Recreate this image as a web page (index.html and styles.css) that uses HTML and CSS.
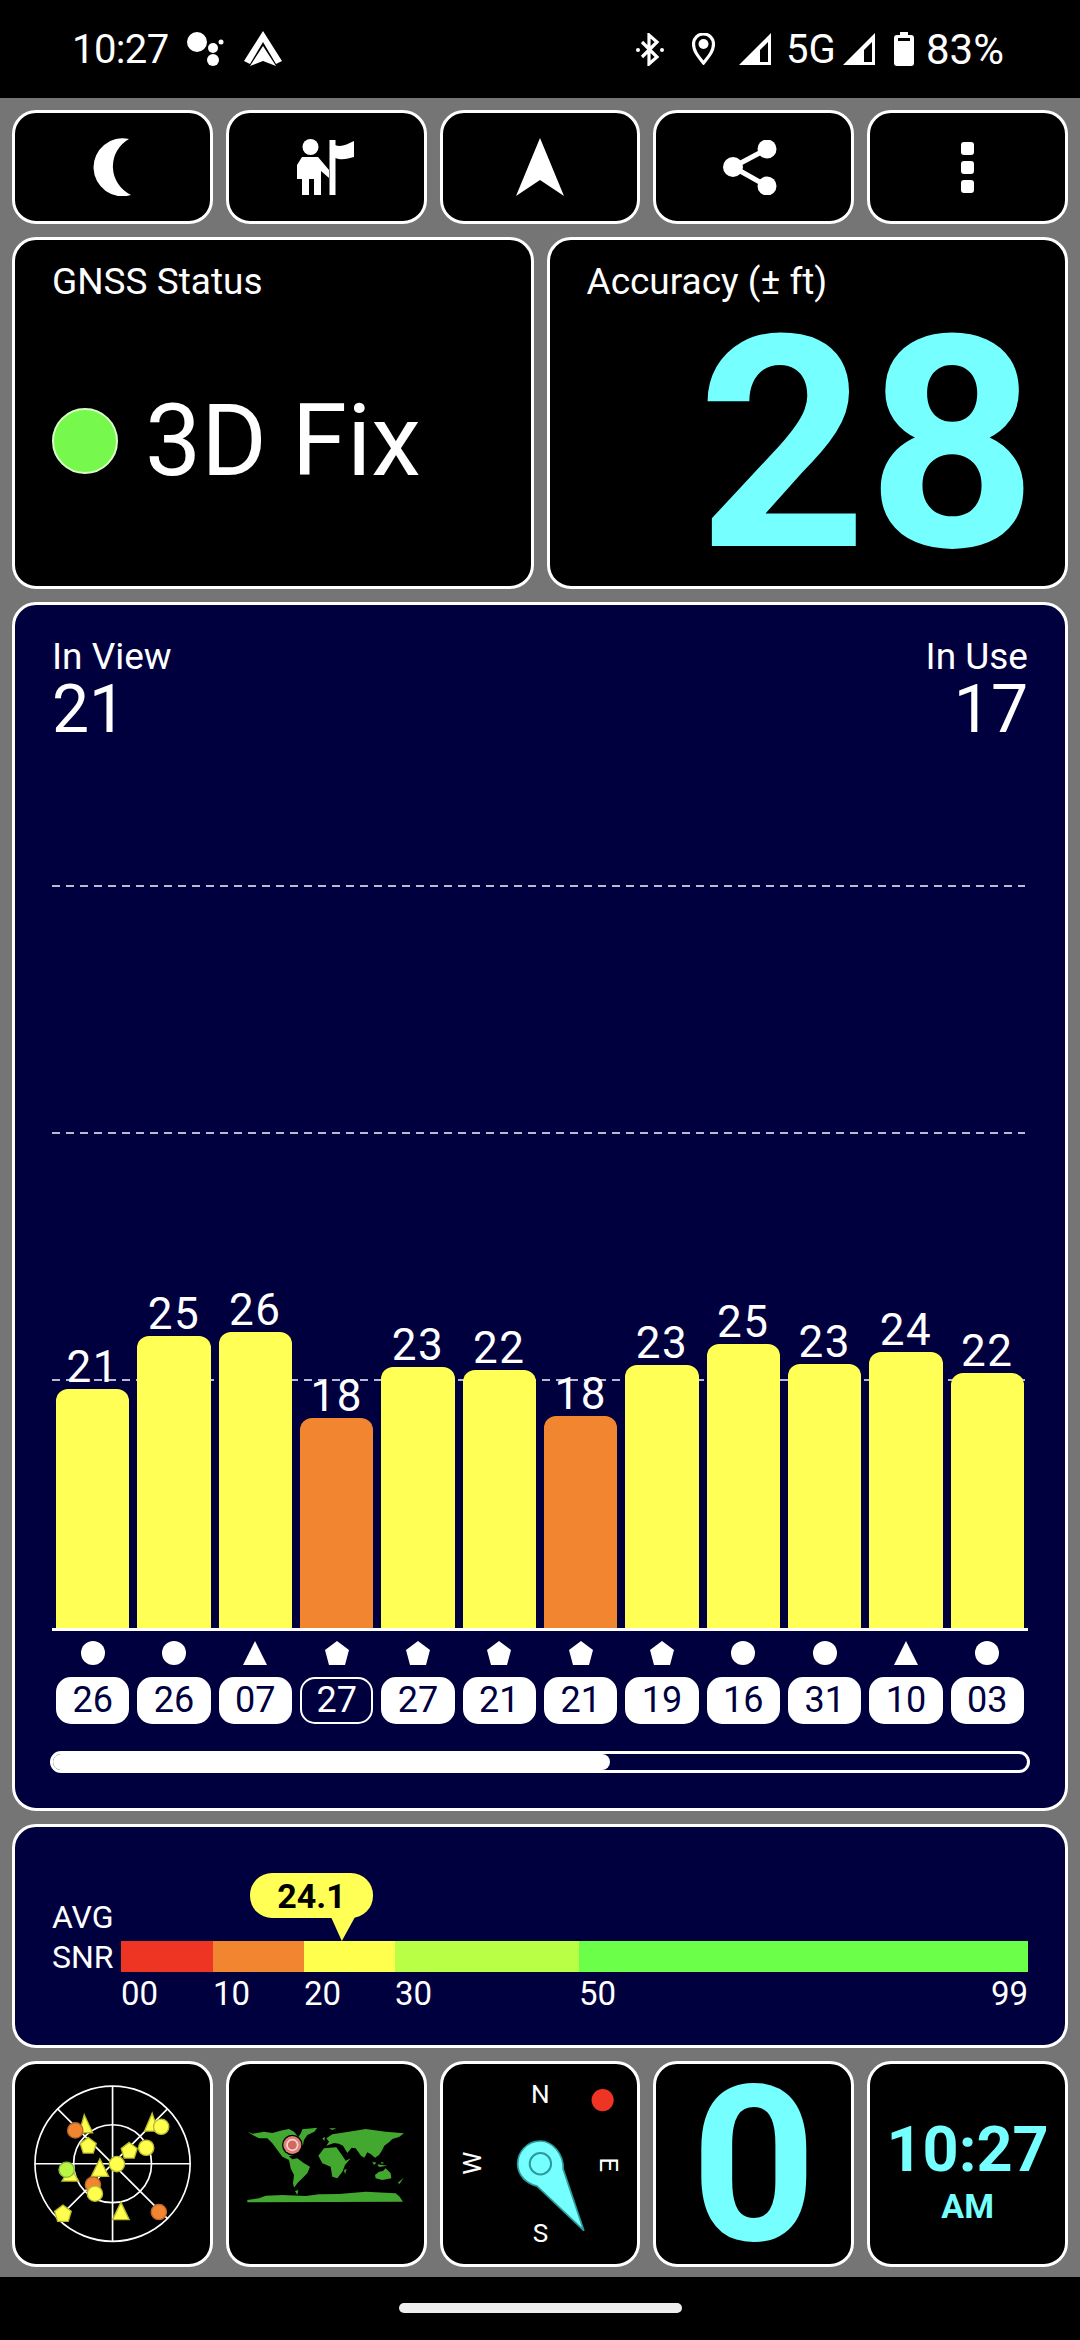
FILE: index.html
```html
<!DOCTYPE html>
<html lang="en">
<head>
  <meta charset="UTF-8">
  <title>GPSTest</title>
  <link rel="stylesheet" href="styles.css">
</head>
<body>
  <!-- STATUS BAR -->
  <div class="status-bar">
    <span class="clock">10:27</span>
    <svg class="ico-assistant" viewBox="186 32 40 36"><circle cx="197" cy="43" r="10"/><circle cx="213" cy="49" r="5"/><circle cx="221" cy="43" r="2.5"/><circle cx="213" cy="61" r="6"/></svg>
    <svg class="ico-auto" viewBox="244 32 38 36"><path d="M263 32 282 62 276 65 263 43 250 65 244 62Z"/><path d="M263 47 276 67 263 62 250 67Z"/></svg>
    <div class="spacer"></div>
    <svg class="ico-bt" viewBox="638 33 28 33"><path class="line" d="M644 42 659 57 651 64V35L659 42 644 57"/><circle cx="640" cy="50" r="2"/><circle cx="664" cy="50" r="2"/></svg>
    <svg class="ico-pin" viewBox="694 33 23 32"><path class="line" d="M705.500 63C700 56 695.500 51 695.500 44A10 10 0 0 1 715.500 44C715.500 51 711 56 705.500 63Z"/><circle cx="705.500" cy="44" r="5"/></svg>
    <svg class="ico-signal" viewBox="0 0 32 32"><path fill-rule="evenodd" d="M0 32 32 0V32ZM21 29H29V9L21 17Z"/></svg>
    <span class="net">5G</span>
    <svg class="ico-signal ico-signal2" viewBox="0 0 32 32"><path fill-rule="evenodd" d="M0 32 32 0V32ZM21 29H29V9L21 17Z"/></svg>
    <svg class="ico-batt" viewBox="0 0 20 34"><path fill-rule="evenodd" d="M6 0H14V3H17Q20 3 20 6V31Q20 34 17 34H3Q0 34 0 31V6Q0 3 3 3H6ZM4 6V9H16V6Z"/></svg>
    <span class="pct">83%</span>
  </div>

  <div class="main">
    <!-- BOTONES -->
    <div class="row-buttons">
      <div class="card btn">
        <svg class="ico-moon" viewBox="0 0 38 58"><path d="M36 1A29 29 0 1 0 38 57 31.500 31.500 0 0 1 36 1Z"/></svg>
      </div>
      <div class="card btn">
        <svg class="ico-flag" viewBox="298 138 58 58"><circle cx="311.500" cy="147" r="8"/><path d="M303 157H319L330 170V178L322 171V195H315V179H310V195H303V179H298V165Z"/><path d="M330.500 140H336.500V195H330.500Z"/><path d="M336 145C342 148 348 144 355 141V157C349 158 344 161 336 158Z"/></svg>
      </div>
      <div class="card btn">
        <svg class="ico-nav" viewBox="516 139 48 58"><path d="M540 139 564 197 540 181 516 197Z"/></svg>
      </div>
      <div class="card btn">
        <svg class="ico-share" viewBox="722 140 54 55"><path class="line-thick" d="M766 149 732 167 766 186"/><circle cx="732" cy="167" r="10"/><circle cx="766" cy="149" r="9.500"/><circle cx="766" cy="186" r="9.500"/></svg>
      </div>
      <div class="card btn">
        <div class="dots"><i></i><i></i><i></i></div>
      </div>
    </div>

    <!-- ESTADO Y PRECISION -->
    <div class="row-status">
      <div class="card gnss">
        <div class="label">GNSS Status</div>
        <div class="fix"><span class="fix-dot"></span><span class="fix-text">3D Fix</span></div>
      </div>
      <div class="card accuracy">
        <div class="label">Accuracy (± ft)</div>
        <div class="accuracy-value">28</div>
      </div>
    </div>

    <!-- SATELITES -->
    <div class="card panel sats">
      <div class="sats-head">
        <div><div class="label">In View</div><div class="count">21</div></div>
        <div class="right"><div class="label">In Use</div><div class="count">17</div></div>
      </div>
      <div class="chart">
        <div class="grid-line" style="bottom: 741px"></div>
        <div class="grid-line" style="bottom: 494px"></div>
        <div class="grid-line" style="bottom: 247px"></div>
        <div class="bars" id="bars"></div>
      </div>
      <div class="axis"></div>
      <div class="marks" id="marks"></div>
      <div class="chips" id="chips"></div>
      <div class="scroll"><div class="scroll-thumb"></div></div>
    </div>

    <!-- SNR PROMEDIO -->
    <div class="card panel snr">
      <div class="snr-labels"><div>AVG</div><div>SNR</div></div>
      <div class="snr-scale">
        <div class="bubble">24.1</div>
        <div class="seg s1"><div class="seg-color"></div><div class="ticks"><span>00</span></div></div>
        <div class="seg s2"><div class="seg-color"></div><div class="ticks"><span>10</span></div></div>
        <div class="seg s3"><div class="seg-color"></div><div class="ticks"><span>20</span></div></div>
        <div class="seg s4"><div class="seg-color"></div><div class="ticks"><span>30</span></div></div>
        <div class="seg s5"><div class="seg-color"></div><div class="ticks"><span>50</span><span>99</span></div></div>
      </div>
    </div>

    <!-- WIDGETS -->
    <div class="row-widgets">
      <div class="card widget">
        <svg class="fill-svg" viewBox="45 42 585 597">
          <g class="radar">
            <circle cx="338" cy="340" r="233"/><circle cx="338" cy="340" r="117"/>
            <path d="M105 340H571M338 107V573M173 175 503 505M503 175 173 505"/>
          </g>
          <g class="sat-y">
            <path d="M253 193 278 247H238Z"/>
            <path d="M457 188 475 242H434Z"/>
            <circle cx="484" cy="229" r="23"/>
            <path d="M265 261 289 279 280 308H250L241 279Z"/>
            <path d="M388 276 412 294 403 323H373L364 294Z"/>
            <circle cx="439" cy="292" r="23"/>
            <circle cx="351" cy="341" r="23"/>
            <path d="M300 325 326 378H274Z"/>
            <path d="M212 350 236 392H186Z"/>
          </g>
          <circle class="sat-o" cx="226" cy="240" r="23"/>
          <circle class="sat-l" cx="200" cy="358" r="23"/>
          <circle class="sat-o" cx="279" cy="403" r="23"/>
          <g class="sat-y">
            <circle cx="285" cy="430" r="23"/>
            <path d="M189 464 214 483 205 513H173L164 483Z"/>
            <path d="M363 456 388 508H338Z"/>
          </g>
          <circle class="sat-o" cx="477" cy="485" r="23"/>
        </svg>
      </div>
      <div class="card widget center">
        <svg class="world" viewBox="0 0 510 300">
          <g class="land">
            <path d="M25 50 42 56 75 50 100 54 130 46 150 42 165 50 178 66 186 54 190 43 235 38 226 50 205 60 195 75 192 90 178 105 165 120 150 124 165 138 150 135 130 125 115 105 100 85 85 70 60 70 45 62Z"/>
            <path d="M150 135 175 130 195 145 213 155 205 175 190 190 175 205 165 218 162 205 165 180 155 160Z"/>
            <path d="M262 70 280 58 320 52 380 42 440 50 495 55 480 66 460 72 450 82 436 92 428 108 420 120 408 128 396 118 385 112 376 128 366 122 350 100 338 98 325 114 312 92 300 86 285 84 262 92 270 80Z"/>
            <path d="M238 122 255 100 292 97 305 115 320 137 335 130 318 150 310 170 295 190 280 185 275 155 250 145Z"/>
            <path d="M408 180 420 170 432 168 440 160 455 175 457 190 430 195 410 190Z"/>
            <path d="M25 255 60 250 80 242 130 240 200 243 240 238 300 237 380 230 470 235 482 245 492 260 25 262Z"/>
            <path d="M400 140 412 143 405 150ZM415 148 445 152 420 156ZM425 140 436 144 428 146ZM476 204 494 188 482 206ZM315 165 323 162 318 178ZM250 70 258 66 256 78ZM270 40 292 40 280 45ZM168 228 178 225 175 240Z"/>
          </g>
          <circle class="target-bg" cx="160" cy="90" r="31"/>
          <circle class="target" cx="160" cy="90" r="27"/>
          <circle class="target-ring" cx="160" cy="90" r="16"/>
        </svg>
      </div>
      <div class="card widget">
        <svg class="fill-svg" viewBox="39 -18 582 597">
          <text class="cardinal" x="330" y="99" text-anchor="middle">N</text>
          <text class="cardinal" x="330" y="513" text-anchor="middle">S</text>
          <text class="cardinal" text-anchor="middle" transform="translate(508 283) rotate(90)">E</text>
          <text class="cardinal" text-anchor="middle" transform="translate(152 278) rotate(-90)">W</text>
          <circle class="compass-dot" cx="516" cy="90" r="33"/>
          <path class="needle" d="M398 296C400 250 365 212 330 212 290 212 262 245 262 280 262 318 292 340 320 347L460 480Z"/>
          <circle class="needle-ring" cx="330" cy="280" r="32"/>
        </svg>
      </div>
      <div class="card widget center">
        <div class="big-zero">0</div>
      </div>
      <div class="card widget center time-box">
        <div class="time">10:27</div>
        <div class="ampm">AM</div>
      </div>
    </div>
  </div>

  <div class="nav-bar"><div class="pill"></div></div>

  <script>
    // Datos de los satelites
    const sats = [
      { snr: 21, h: 239, shape: "c", id: "26" },
      { snr: 25, h: 292, shape: "c", id: "26" },
      { snr: 26, h: 296, shape: "t", id: "07" },
      { snr: 18, h: 210, shape: "p", id: "27", off: true },
      { snr: 23, h: 261, shape: "p", id: "27" },
      { snr: 22, h: 258, shape: "p", id: "21" },
      { snr: 18, h: 212, shape: "p", id: "21" },
      { snr: 23, h: 263, shape: "p", id: "19" },
      { snr: 25, h: 284, shape: "c", id: "16" },
      { snr: 23, h: 264, shape: "c", id: "31" },
      { snr: 24, h: 276, shape: "t", id: "10" },
      { snr: 22, h: 255, shape: "c", id: "03" }
    ];

    const shapes = {
      c: '<circle cx="12" cy="12" r="12"/>',
      t: '<path d="M12 0 24 24H0Z"/>',
      p: '<path d="M12 0 24 9 20 24H4L0 9Z"/>'
    };

    document.getElementById("bars").innerHTML = sats.map(s =>
      `<div class="bar-col"><span class="bar-value">${s.snr}</span>` +
      `<div class="bar ${s.snr < 20 ? "bar-low" : ""}" style="height: ${s.h}px"></div></div>`
    ).join("");

    document.getElementById("marks").innerHTML = sats.map(s =>
      `<svg viewBox="0 0 24 24">${shapes[s.shape]}</svg>`
    ).join("");

    document.getElementById("chips").innerHTML = sats.map(s =>
      `<div class="chip ${s.off ? "chip-off" : ""}">${s.id}</div>`
    ).join("");
  </script>
</body>
</html>
```

FILE: styles.css
```css
* {
  box-sizing: border-box;
}

body {
  margin: 0;
  width: 1080px;
  height: 2340px;
  background-color: #000;
  color: white;
  font-family: Roboto, sans-serif;
  overflow: hidden;
}

svg {
  display: block;
  fill: white;
}

.line {
  fill: none;
  stroke: white;
  stroke-width: 3.2;
}

.line-thick {
  fill: none;
  stroke: white;
  stroke-width: 5;
}

/* Status bar */
.status-bar {
  height: 98px;
  display: flex;
  align-items: center;
  padding: 0 76px 0 72px;
  font-size: 40px;
}

.spacer {
  flex: 1;
}

.clock {
  width: 93px;
  letter-spacing: -0.6px;
  margin-top: 1px;
}

.ico-assistant {
  width: 40px;
  height: 36px;
  margin-left: 21px;
}

.ico-auto {
  width: 38px;
  height: 36px;
  margin-left: 18px;
}

.ico-bt {
  width: 28px;
  height: 33px;
}

.ico-pin {
  width: 23px;
  height: 32px;
  margin-left: 28px;
}

.ico-signal {
  width: 32px;
  height: 32px;
  margin-left: 24px;
}

.ico-signal2 {
  margin-left: 12px;
}

.net {
  margin-left: 15px;
  width: 45px;
}

.ico-batt {
  width: 20px;
  height: 34px;
  margin-left: 19px;
}

.pct {
  margin-left: 12px;
  font-size: 42px;
}

/* Main area */
.main {
  height: 2179px;
  background-color: #757575;
  padding: 12px 12px 0;
  display: flex;
  flex-direction: column;
  gap: 13px;
}

.card {
  background-color: #000;
  border: 3px solid white;
  border-radius: 24px;
}

.panel {
  background-color: #00003f;
}

.row-buttons,
.row-widgets {
  display: grid;
  grid-template-columns: repeat(5, 1fr);
  gap: 13px;
}

.row-buttons {
  height: 114px;
}

.btn {
  display: flex;
  align-items: center;
  justify-content: center;
}

.ico-moon {
  width: 38px;
  height: 58px;
}

.ico-flag {
  width: 58px;
  height: 58px;
}

.ico-nav {
  width: 48px;
  height: 58px;
}

.ico-share {
  width: 54px;
  height: 55px;
  margin-right: 8px;
}

.dots {
  display: flex;
  flex-direction: column;
  gap: 6px;
}

.dots i {
  width: 13px;
  height: 13px;
  background-color: white;
  border-radius: 3px;
}

/* GNSS + accuracy */
.row-status {
  height: 352px;
  display: grid;
  grid-template-columns: 1fr 1fr;
  gap: 13px;
}

.label {
  font-size: 37px;
  line-height: 40px;
}

.gnss {
  padding: 22px 37px 0;
}

.fix {
  display: flex;
  align-items: center;
  margin-top: 89px;
}

.fix-dot {
  width: 66px;
  height: 66px;
  border-radius: 50%;
  background-color: #76f94c;
  border: 2px solid #d8ffc8;
}

.fix-text {
  font-size: 100px;
  line-height: 100px;
  margin-left: 27px;
}

.accuracy {
  padding: 22px 37px 0;
}

.accuracy-value {
  font-size: 296px;
  line-height: 240px;
  font-weight: 700;
  color: #76ffff;
  text-align: right;
  margin: 23px -9px 0 0;
}

/* Satellites panel */
.sats {
  height: 1209px;
  padding: 32px 37px 35px;
  display: flex;
  flex-direction: column;
}

.sats-head {
  display: flex;
  justify-content: space-between;
}

.right {
  text-align: right;
}

.count {
  font-size: 66px;
  line-height: 60px;
  margin-top: 3px;
}

.chart {
  flex: 1;
  position: relative;
  display: flex;
  align-items: flex-end;
}

.grid-line {
  position: absolute;
  left: 0;
  width: 973px;
  height: 2px;
  background-image: repeating-linear-gradient(to right, #b9b9d2 0 8px, transparent 8px 14px);
}

.bars,
.marks,
.chips {
  width: 100%;
  display: grid;
  grid-template-columns: repeat(12, 1fr);
  column-gap: 8px;
  padding: 0 4px;
}

.bars {
  position: relative;
  align-items: end;
}

.bar-col {
  display: flex;
  flex-direction: column;
  align-items: center;
}

.bar-value {
  font-size: 44px;
  line-height: 44px;
  letter-spacing: 1.5px;
}

.bar {
  width: 100%;
  background-color: #ffff55;
  border-radius: 12px 12px 0 0;
}

.bar-low {
  background-color: #f28530;
}

.axis {
  height: 3px;
  background-color: white;
}

.marks {
  margin-top: 10px;
  justify-items: center;
}

.marks svg {
  width: 24px;
  height: 24px;
}

.chips {
  margin-top: 12px;
}

.chip {
  height: 47px;
  border-radius: 15px;
  background-color: white;
  color: #00003f;
  border: 2px solid white;
  font-size: 36px;
  line-height: 43px;
  text-align: center;
}

.chip-off {
  background-color: transparent;
  color: white;
}

.scroll {
  height: 22px;
  margin: 27px -2px 0;
  border: 3px solid white;
  border-radius: 11px;
}

.scroll-thumb {
  width: 57.2%;
  height: 100%;
  background-color: white;
  border-radius: 8px;
}

/* Average SNR */
.snr {
  height: 224px;
  padding: 70px 37px 0;
  display: flex;
}

.snr-labels {
  width: 69px;
  font-size: 32px;
  line-height: 40px;
}

.snr-scale {
  flex: 1;
  display: flex;
  position: relative;
  height: 80px;
  margin-top: 44px;
}

.seg-color {
  height: 31px;
}

.ticks {
  display: flex;
  justify-content: space-between;
  font-size: 33px;
  line-height: 36px;
  margin-top: 4px;
}

.s1 { width: 92px; }
.s2 { width: 91px; }
.s3 { width: 91px; }
.s4 { width: 184px; }
.s5 { flex: 1; }

.s1 .seg-color { background-color: #ee3524; }
.s2 .seg-color { background-color: #f28530; }
.s3 .seg-color { background-color: #ffff4d; }
.s4 .seg-color { background-color: #b8ff45; }
.s5 .seg-color { background-color: #6bff4a; }

.bubble {
  position: absolute;
  left: 129px;
  top: -68px;
  width: 123px;
  height: 45px;
  border-radius: 22px;
  background-color: #ffff55;
  color: #000;
  font-size: 34px;
  font-weight: 700;
  line-height: 46px;
  text-align: center;
}

.bubble::after {
  content: "";
  position: absolute;
  left: 81px;
  top: 44px;
  width: 24px;
  height: 24px;
  background-color: #ffff55;
  clip-path: polygon(0 0, 100% 0, 45% 100%);
}

/* Widgets */
.row-widgets {
  height: 205px;
}

.center {
  display: flex;
  align-items: center;
  justify-content: center;
}

.fill-svg {
  width: 100%;
  height: 100%;
}

.radar {
  fill: none;
  stroke: white;
  stroke-width: 5;
}

.sat-y {
  fill: #ffff4d;
  stroke: #b9b92c;
  stroke-width: 4;
}

.sat-o {
  fill: #f28530;
  stroke: #b9682c;
  stroke-width: 4;
}

.sat-l {
  fill: #b8f545;
  stroke: #86b53a;
  stroke-width: 4;
}

.world {
  width: 170px;
  height: 100px;
  flex: none;
  margin: 3px 5px 0 0;
}

.land {
  fill: #43a82f;
}

.target-bg {
  fill: #000;
}

.target {
  fill: #e08078;
}

.target-ring {
  fill: #cf6a60;
  stroke: #ffd8d0;
  stroke-width: 5;
}

.cardinal {
  font-family: Roboto, sans-serif;
  font-size: 78px;
  fill: white;
}

.compass-dot {
  fill: #ee3524;
}

.needle {
  fill: #76ffff;
  stroke: #2b9a9a;
  stroke-width: 5;
}

.needle-ring {
  fill: none;
  stroke: #2b9a9a;
  stroke-width: 6;
}

.big-zero {
  font-size: 218px;
  line-height: 195px;
  font-weight: 700;
  color: #76ffff;
  margin-top: 4px;
}

.time-box {
  flex-direction: column;
  color: #76ffff;
  font-weight: 700;
  padding-top: 18px;
}

.time {
  font-size: 63px;
  line-height: 63px;
}

.ampm {
  font-size: 34px;
  line-height: 42px;
  margin-top: 4px;
}

/* Navigation bar */
.nav-bar {
  height: 63px;
  display: flex;
  justify-content: center;
  padding-top: 26px;
}

.pill {
  width: 283px;
  height: 10px;
  background-color: #eee;
  border-radius: 5px;
}
```
